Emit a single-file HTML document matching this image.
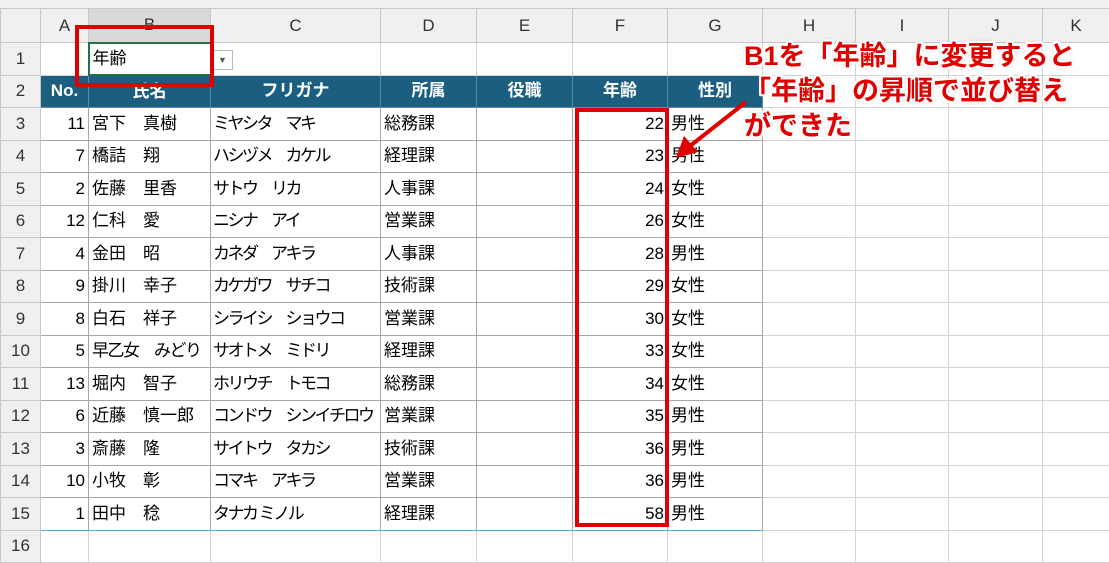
<!DOCTYPE html>
<html><head><meta charset="utf-8"><style>
body{margin:0;width:1109px;height:553px;overflow:hidden;background:#fff;font-family:"Liberation Sans","Noto Sans CJK JP",sans-serif;position:relative}
.top{position:absolute;left:0;top:0;width:1109px;height:8px;background:#f0f0f0}
table{position:absolute;left:0;top:8px;width:1109px;border-collapse:collapse;table-layout:fixed}
td{border:1px solid #d4d4d4;padding:0 3px;font-size:17px;color:#000;white-space:nowrap;overflow:hidden;height:32.5px;box-sizing:border-box;line-height:20px}
tr.h td{background:#f0f0f0;color:#333;text-align:center;font-size:17px;height:34px;border-color:#c8c8c8}
td.rh{background:#f0f0f0;text-align:center;color:#333;border-color:#c8c8c8;padding:0}
tr.hd td.d{background:#1b5e80;color:#fff;font-weight:bold;text-align:center;border-color:#5a8aa5}
td.n{text-align:right}
td.b{border-color:#a6a6a6}
td.k{letter-spacing:-2.5px;padding-left:2px}
.ann{position:absolute;color:#e00000;font-weight:bold;font-size:27px;line-height:35px;left:744px;top:39px;text-shadow:-2px -2px 0 #fff,2px -2px 0 #fff,-2px 2px 0 #fff,2px 2px 0 #fff,0 2px 0 #fff,0 -2px 0 #fff,2px 0 0 #fff,-2px 0 0 #fff,0 0 5px #999}
</style></head><body>
<div class="top"></div>
<table>
<colgroup><col style="width:40px"><col style="width:48px"><col style="width:122px"><col style="width:170px"><col style="width:96px"><col style="width:96px"><col style="width:95px"><col style="width:95px"><col style="width:93px"><col style="width:93px"><col style="width:94px"><col style="width:67px"></colgroup>
<tr class="h"><td style="background:#f0f0f0"></td><td>A</td><td style="background:#d9d9d9">B</td><td>C</td><td>D</td><td>E</td><td>F</td><td>G</td><td>H</td><td>I</td><td>J</td><td>K</td></tr>
<tr><td class="rh">1</td><td></td><td style="border:2px solid #217346">年齢</td><td style="padding:0"><span style="display:inline-block;width:18px;height:18px;border:1px solid #bbb;font-size:9px;text-align:center;line-height:18px;color:#555;margin-left:1px">▼</span></td><td></td><td></td><td></td><td></td><td></td><td></td><td></td><td></td></tr>
<tr class="hd"><td class="rh">2</td><td class="d">No.</td><td class="d">氏名</td><td class="d">フリガナ</td><td class="d">所属</td><td class="d">役職</td><td class="d">年齢</td><td class="d">性別</td><td></td><td></td><td></td><td></td></tr>
<tr><td class="rh">3</td><td class="n b">11</td><td class="b">宮下　真樹</td><td class="b k">ミヤシタ　マキ</td><td class="b">総務課</td><td class="b"></td><td class="n b">22</td><td class="b">男性</td><td></td><td></td><td></td><td></td></tr>
<tr><td class="rh">4</td><td class="n b">7</td><td class="b">橋詰　翔</td><td class="b k">ハシヅメ　カケル</td><td class="b">経理課</td><td class="b"></td><td class="n b">23</td><td class="b">男性</td><td></td><td></td><td></td><td></td></tr>
<tr><td class="rh">5</td><td class="n b">2</td><td class="b">佐藤　里香</td><td class="b k">サトウ　リカ</td><td class="b">人事課</td><td class="b"></td><td class="n b">24</td><td class="b">女性</td><td></td><td></td><td></td><td></td></tr>
<tr><td class="rh">6</td><td class="n b">12</td><td class="b">仁科　愛</td><td class="b k">ニシナ　アイ</td><td class="b">営業課</td><td class="b"></td><td class="n b">26</td><td class="b">女性</td><td></td><td></td><td></td><td></td></tr>
<tr><td class="rh">7</td><td class="n b">4</td><td class="b">金田　昭</td><td class="b k">カネダ　アキラ</td><td class="b">人事課</td><td class="b"></td><td class="n b">28</td><td class="b">男性</td><td></td><td></td><td></td><td></td></tr>
<tr><td class="rh">8</td><td class="n b">9</td><td class="b">掛川　幸子</td><td class="b k">カケガワ　サチコ</td><td class="b">技術課</td><td class="b"></td><td class="n b">29</td><td class="b">女性</td><td></td><td></td><td></td><td></td></tr>
<tr><td class="rh">9</td><td class="n b">8</td><td class="b">白石　祥子</td><td class="b k">シライシ　ショウコ</td><td class="b">営業課</td><td class="b"></td><td class="n b">30</td><td class="b">女性</td><td></td><td></td><td></td><td></td></tr>
<tr><td class="rh">10</td><td class="n b">5</td><td class="b" style="letter-spacing:-1.5px">早乙女　みどり</td><td class="b k">サオトメ　ミドリ</td><td class="b">経理課</td><td class="b"></td><td class="n b">33</td><td class="b">女性</td><td></td><td></td><td></td><td></td></tr>
<tr><td class="rh">11</td><td class="n b">13</td><td class="b">堀内　智子</td><td class="b k">ホリウチ　トモコ</td><td class="b">総務課</td><td class="b"></td><td class="n b">34</td><td class="b">女性</td><td></td><td></td><td></td><td></td></tr>
<tr><td class="rh">12</td><td class="n b">6</td><td class="b">近藤　慎一郎</td><td class="b k">コンドウ　シンイチロウ</td><td class="b">営業課</td><td class="b"></td><td class="n b">35</td><td class="b">男性</td><td></td><td></td><td></td><td></td></tr>
<tr><td class="rh">13</td><td class="n b">3</td><td class="b">斎藤　隆</td><td class="b k">サイトウ　タカシ</td><td class="b">技術課</td><td class="b"></td><td class="n b">36</td><td class="b">男性</td><td></td><td></td><td></td><td></td></tr>
<tr><td class="rh">14</td><td class="n b">10</td><td class="b">小牧　彰</td><td class="b k">コマキ　アキラ</td><td class="b">営業課</td><td class="b"></td><td class="n b">36</td><td class="b">男性</td><td></td><td></td><td></td><td></td></tr>
<tr><td class="rh">15</td><td class="n b" style="border-bottom:1px solid #5aa6d6">1</td><td class="b" style="border-bottom:1px solid #5aa6d6">田中　稔</td><td class="b k" style="border-bottom:1px solid #5aa6d6">タナカ ミノル</td><td class="b" style="border-bottom:1px solid #5aa6d6">経理課</td><td class="b" style="border-bottom:1px solid #5aa6d6"></td><td class="n b" style="border-bottom:1px solid #5aa6d6">58</td><td class="b" style="border-bottom:1px solid #5aa6d6">男性</td><td></td><td></td><td></td><td></td></tr>
<tr><td class="rh">16</td><td></td><td></td><td></td><td></td><td></td><td></td><td></td><td></td><td></td><td></td><td></td></tr>
</table>
<div style="position:absolute;left:75px;top:25px;width:131px;height:54px;border:4px solid #e00000"></div>
<div style="position:absolute;left:575px;top:108px;width:86px;height:411px;border:4px solid #e00000"></div>
<svg style="position:absolute;left:0;top:0" width="1109" height="553"><line x1="746" y1="102" x2="690" y2="146" stroke="#e00000" stroke-width="4"/><polygon points="676,158 684,136 698,152" fill="#e00000"/></svg>
<div class="ann">B1を「年齢」に変更すると<br>「年齢」の昇順で並び替え<br>ができた</div>
</body></html>
